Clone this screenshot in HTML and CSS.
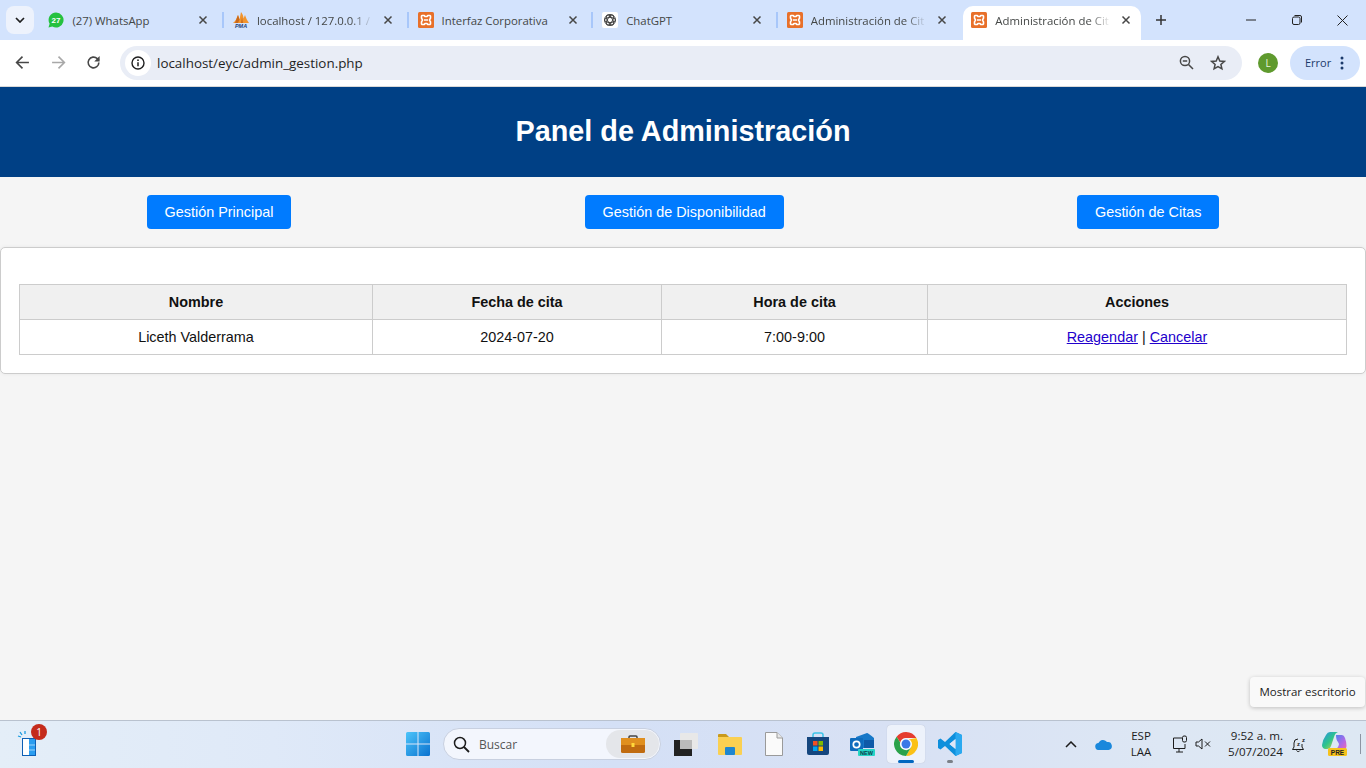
FILE: index.html
```html
<!DOCTYPE html>
<html lang="es">
<head>
<meta charset="utf-8">
<title>Administración de Citas</title>
<link rel="stylesheet" href="styles.css">
</head>
<body>
<svg class="defs" width="0" height="0" aria-hidden="true">
  <symbol id="xampp" viewBox="0 0 16 16">
    <rect width="16" height="16" rx="1.500" fill="#e8702a"/>
    <path d="M4 3.500h2.200l.8 1h2l.8-1H12l.5.5v2.200l-1 1.800 1 1.800V12l-.5.5H9.800l-.8-1H7l-.8 1H4l-.5-.5V9.800l1-1.800-1-1.800V4Z" fill="none" stroke="#fff" stroke-width="1.600" stroke-linejoin="round"/>
    <path d="M6 8h4" stroke="#fff" stroke-width="1.500"/>
  </symbol>
  <symbol id="close" viewBox="0 0 10 10">
    <path d="M1.500 1.500l7 7M8.500 1.500l-7 7" stroke="#474747" stroke-width="1.500" fill="none"/>
  </symbol>
</svg>

<div class="strip">
  <div class="tab-search"><svg width="10" height="6" viewBox="0 0 10 6"><path d="M1 1l4 4 4-4" fill="none" stroke="#1f1f1f" stroke-width="1.700"/></svg></div>
  <div class="tabs">
    <div class="tab">
      <svg class="fav" viewBox="0 0 16 16"><path d="M8 .5a7.500 7.500 0 0 0-6.400 11.300L.5 15.500l3.800-1A7.500 7.500 0 1 0 8 .5Z" fill="#25c13f"/><text x="8" y="11" class="fav-num">27</text></svg>
      <span class="title">(27) WhatsApp</span>
      <svg class="x" viewBox="0 0 10 10"><use href="#close"/></svg>
    </div>
    <div class="tab">
      <svg class="fav" viewBox="0 0 16 16"><path d="M0 11C3 9 3.500 6 5 3l1.500 4.500L8 0c1.500 2 2.500 4 2.500 6.500L12 3c1 3 2.500 6 4 8Z" fill="#f2952e"/><path d="M5 3l1.500 4.500L5 11H2ZM9 5l1 6H8Z" fill="#c9681a"/><text x="8" y="15.500" class="fav-pma">PMA</text></svg>
      <span class="title fade">localhost / 127.0.0.1 /</span>
      <svg class="x" viewBox="0 0 10 10"><use href="#close"/></svg>
    </div>
    <div class="tab">
      <svg class="fav" viewBox="0 0 16 16"><use href="#xampp"/></svg>
      <span class="title">Interfaz Corporativa</span>
      <svg class="x" viewBox="0 0 10 10"><use href="#close"/></svg>
    </div>
    <div class="tab">
      <svg class="fav" viewBox="0 0 16 16"><rect width="16" height="16" rx="2" fill="#fff"/><g fill="none" stroke="#444" stroke-width="1"><circle cx="8" cy="8" r="5.500"/><ellipse cx="8" cy="8" rx="5.500" ry="2.500" transform="rotate(60 8 8)"/><ellipse cx="8" cy="8" rx="5.500" ry="2.500" transform="rotate(-60 8 8)"/><ellipse cx="8" cy="8" rx="5.500" ry="2.500"/></g></svg>
      <span class="title">ChatGPT</span>
      <svg class="x" viewBox="0 0 10 10"><use href="#close"/></svg>
    </div>
    <div class="tab last">
      <svg class="fav" viewBox="0 0 16 16"><use href="#xampp"/></svg>
      <span class="title fade">Administración de Cit</span>
      <svg class="x" viewBox="0 0 10 10"><use href="#close"/></svg>
    </div>
    <div class="tab active">
      <svg class="fav" viewBox="0 0 16 16"><use href="#xampp"/></svg>
      <span class="title fade">Administración de Cit</span>
      <svg class="x" viewBox="0 0 10 10"><use href="#close"/></svg>
    </div>
  </div>
  <svg class="plus" width="12" height="12" viewBox="0 0 12 12"><path d="M6 1v10M1 6h10" stroke="#333" stroke-width="1.500"/></svg>
  <div class="win">
    <svg width="10" height="10" viewBox="0 0 10 10"><path d="M0 5h10" stroke="#222" stroke-width="1"/></svg>
    <svg width="10" height="10" viewBox="0 0 10 10"><rect x=".5" y="2" width="7.500" height="7.500" rx="1.500" fill="none" stroke="#222"/><path d="M2.500.5H8A1.500 1.500 0 0 1 9.500 2v5.500" fill="none" stroke="#222"/></svg>
    <svg width="11" height="11" viewBox="0 0 11 11"><path d="M.5.500l10 10M10.500.500l-10 10" stroke="#222" stroke-width="1"/></svg>
  </div>
</div>

<div class="toolbar">
  <svg class="nav-ic first" viewBox="0 0 14 14"><path d="M13 7H2M7 1.500 1.500 7 7 12.500" fill="none" stroke="#474747" stroke-width="1.500"/></svg>
  <svg class="nav-ic" viewBox="0 0 14 14"><path d="M1 7h11M7 1.500 12.500 7 7 12.500" fill="none" stroke="#a8a8a8" stroke-width="1.500"/></svg>
  <svg class="nav-ic" viewBox="0 0 14 14"><path d="M12 7a5 5 0 1 1-1.500-3.600L12 5" fill="none" stroke="#474747" stroke-width="1.500"/><path d="M12.700 1v5h-5Z" fill="#474747"/></svg>
  <div class="omni">
    <span class="info"><svg width="14" height="14" viewBox="0 0 14 14"><circle cx="7" cy="7" r="6" fill="none" stroke="#1f1f1f" stroke-width="1.400"/><path d="M7 6.200v4" stroke="#1f1f1f" stroke-width="1.500"/><circle cx="7" cy="4.200" r=".9" fill="#1f1f1f"/></svg></span>
    <span class="url">localhost/eyc/admin_gestion.php</span>
    <svg class="zoom" width="15" height="15" viewBox="0 0 15 15"><circle cx="6" cy="6" r="4.600" fill="none" stroke="#474747" stroke-width="1.500"/><path d="M3.800 6h4.400M9.500 9.500l4.500 4.500" stroke="#474747" stroke-width="1.500"/></svg>
    <svg class="star" width="16" height="16" viewBox="0 0 16 16"><path d="M8 1.800l1.800 4.200 4.500.4-3.400 3 1 4.400L8 11.500l-3.900 2.300 1-4.400-3.400-3 4.500-.4Z" fill="none" stroke="#474747" stroke-width="1.500"/></svg>
  </div>
  <span class="avatar">L</span>
  <div class="error"><span>Error</span><svg width="4" height="14" viewBox="0 0 4 14"><circle cx="2" cy="2" r="1.500" fill="#1b3a6b"/><circle cx="2" cy="7" r="1.500" fill="#1b3a6b"/><circle cx="2" cy="12" r="1.500" fill="#1b3a6b"/></svg></div>
</div>

<main class="page">
  <header class="head"><h1>Panel de Administración</h1></header>
  <nav class="actions">
    <a class="btn">Gestión Principal</a>
    <a class="btn">Gestión de Disponibilidad</a>
    <a class="btn">Gestión de Citas</a>
  </nav>
  <section class="panel">
    <table class="citas">
      <thead>
        <tr><th class="c1">Nombre</th><th class="c2">Fecha de cita</th><th class="c3">Hora de cita</th><th class="c4">Acciones</th></tr>
      </thead>
      <tbody>
        <tr><td>Liceth Valderrama</td><td>2024-07-20</td><td>7:00-9:00</td><td><a href="#r">Reagendar</a> | <a href="#c">Cancelar</a></td></tr>
      </tbody>
    </table>
  </section>
  <div class="tip">Mostrar escritorio</div>
</main>

<footer class="taskbar">
  <div class="widget">
    <svg width="24" height="28" viewBox="0 0 24 28"><path d="M1 8l3 1M3 4l2 3M8 3v3" stroke="#1a9be0" stroke-width="1.300"/><rect x="5.500" y="10.500" width="13" height="17" fill="#fff" stroke="#0d5fb5"/><rect x="12" y="11" width="6" height="16" fill="#2a9df0"/><path d="M12 17h6M12 22h6" stroke="#9dd4fa"/></svg>
    <span class="count">1</span>
  </div>
  <div class="center">
    <svg class="start" width="24" height="24" viewBox="0 0 24 24"><defs><linearGradient id="w" x1="0" y1="0" x2="1" y2="1"><stop offset="0" stop-color="#4cc4fa"/><stop offset="1" stop-color="#0a72cf"/></linearGradient></defs><path d="M0 1.500Q0 0 1.500 0H11.500V11.500H0ZM12.500 0H22.500Q24 0 24 1.500V11.500H12.500ZM0 12.500H11.500V24H1.500Q0 24 0 22.500ZM12.500 12.500H24V22.500Q24 24 22.500 24H12.500Z" fill="url(#w)"/></svg>
    <div class="search">
      <svg width="17" height="17" viewBox="0 0 17 17"><circle cx="7" cy="7" r="5.500" fill="none" stroke="#1c1c1c" stroke-width="1.500"/><path d="M11 11l5 5" stroke="#1c1c1c" stroke-width="1.800"/></svg>
      <span class="buscar">Buscar</span>
      <span class="brief"><svg width="24" height="18" viewBox="0 0 24 18"><path d="M8 4V2q0-1 1-1h6q1 0 1 1v2" fill="none" stroke="#444" stroke-width="1.500"/><rect y="3" width="24" height="15" rx="1.500" fill="#c06b10"/><rect y="3" width="24" height="7" fill="#e08f1e"/><rect x="10.500" y="8" width="3" height="4" fill="#ffd83a"/></svg></span>
    </div>
    <div class="apps">
      <span class="app"><svg width="24" height="24" viewBox="0 0 24 24"><rect x="0" y="8" width="18" height="16" fill="#222"/><rect x="6" y="1" width="18" height="16" rx="1" fill="#e8e8e8"/><rect x="6" y="8" width="12" height="9" fill="#bbb"/></svg></span>
      <span class="app"><svg width="26" height="22" viewBox="0 0 26 22"><path d="M1 2q0-1 1-1h7l3 3h-11Z" fill="#c99a1c"/><rect x="1" y="4" width="24" height="18" rx="1" fill="#fad052"/><rect x="8" y="14" width="10" height="8" rx="1" fill="#1f86cf"/></svg></span>
      <span class="app"><svg width="18" height="24" viewBox="0 0 18 24"><path d="M.5.500H12L17.500 6V23.500H.5Z" fill="#fafafa" stroke="#9a9a9a"/><path d="M12 .5V6h5.500" fill="#e8e8e8" stroke="#9a9a9a"/></svg></span>
      <span class="app store"><svg width="24" height="24" viewBox="0 0 24 24"><path d="M7 6V3q0-2 2-2h6q2 0 2 2v3" fill="none" stroke="#3cc4e8" stroke-width="1.500"/><path d="M1 5h22v16q0 2-2 2H3q-2 0-2-2Z" fill="#15467e"/><rect x="7" y="9" width="4.500" height="4.500" fill="#f25022"/><rect x="12.500" y="9" width="4.500" height="4.500" fill="#7fba00"/><rect x="7" y="14.500" width="4.500" height="4.500" fill="#00a4ef"/><rect x="12.500" y="14.500" width="4.500" height="4.500" fill="#ffb900"/></svg></span>
      <span class="app"><svg width="25" height="24" viewBox="0 0 25 24"><path d="M6 5l11-4q1 0 7 5v10H6Z" fill="#1778c8"/><path d="M14 8h10v8H14Z" fill="#0f5aa8"/><rect y="6" width="13" height="13" rx="1" fill="#0f6cbd"/><circle cx="6.500" cy="12.500" r="3.200" fill="none" stroke="#fff" stroke-width="1.700"/><rect x="8" y="17" width="17" height="7" rx="1" fill="#27d5c5"/><text x="16.500" y="22.800" class="badge-new">NEW</text></svg></span>
      <span class="app on"><svg width="24" height="24" viewBox="0 0 24 24"><path d="M12 0a12 12 0 0 1 10.400 6H12a6 6 0 0 0-5.800 4.500L2.600 4.700A12 12 0 0 1 12 0Z" fill="#e53c2f"/><path d="M22.400 6A12 12 0 0 1 12 24l5.200-9A6 6 0 0 0 16 8h-4Z" fill="#fbc116"/><path d="M2.600 4.700A12 12 0 0 0 12 24l5.200-9a6 6 0 0 1-11-4.500Z" fill="#2aa24a"/><circle cx="12" cy="12" r="5.600" fill="#fff"/><circle cx="12" cy="12" r="4.500" fill="#3b78e7"/></svg><i class="run"></i></span>
      <span class="app"><svg width="24" height="24" viewBox="0 0 24 24"><path d="M17.500 0 24 3v18l-6.500 3L7 14l-4.500 3.500L0 16V8l2.500-1.500L7 10ZM17.500 7 11.500 12l6 5Z" fill="#0e8fdc"/><path d="M17.500 0 24 3v18l-6.500 3Z" fill="#2aa9f0"/><path d="M17.500 7v10l-6-5Z" fill="#dde6f6"/></svg><i class="dot"></i></span>
    </div>
  </div>
  <div class="tray">
    <svg class="t-chev" width="12" height="7" viewBox="0 0 12 7"><path d="M1 6l5-5 5 5" fill="none" stroke="#1c1c1c" stroke-width="1.500"/></svg>
    <svg class="t-cloud" width="17" height="12" viewBox="0 0 17 12"><path d="M4 12a3.500 3.500 0 0 1-.5-7A5 5 0 0 1 12 4a4 4 0 0 1 1.500 8Z" fill="#1a88dc"/></svg>
    <div class="lang"><span>ESP</span><span>LAA</span></div>
    <svg class="t-net" width="16" height="18" viewBox="0 0 16 18"><path d="M10 3H1.500v10.500H13V9M7 14v3M4 17h7" fill="none" stroke="#1c1c1c"/><rect x="10.500" y="1" width="4" height="6" rx="1.500" fill="none" stroke="#1c1c1c"/></svg>
    <svg class="t-vol" width="16" height="12" viewBox="0 0 16 12"><path d="M1 4h2.500L7 1v10L3.500 8H1Z" fill="none" stroke="#1c1c1c"/><path d="M10 3.500l5 5M15 3.500l-5 5" stroke="#1c1c1c"/></svg>
    <div class="clock"><span>9:52 a. m.</span><span>5/07/2024</span></div>
    <svg class="t-bell" width="16" height="17" viewBox="0 0 16 17"><path d="M7 3a4 4 0 0 0-4 4v4l-1.500 2.500h11L11 11V8M5.500 14.500a2 2 0 0 0 3.500 0" fill="none" stroke="#1c1c1c"/><text x="6" y="10" class="zz">z</text><text x="11" y="6" class="zz">z</text></svg>
    <svg class="t-copilot" width="26" height="24" viewBox="0 0 26 24"><defs><linearGradient id="cp" x1="0" y1="0" x2="1" y2="1"><stop offset="0" stop-color="#2a8fe8"/><stop offset=".5" stop-color="#2ec58a"/><stop offset="1" stop-color="#f2d23a"/></linearGradient><linearGradient id="cq" x1="0" y1="0" x2="1" y2="1"><stop offset="0" stop-color="#4f7ff0"/><stop offset=".6" stop-color="#b06ae6"/><stop offset="1" stop-color="#ee6ab0"/></linearGradient></defs><path d="M8 0h8q-3 1-4 5l-3 9q-1 3-4 3H3q-3-1-3-4 1-6 4-10 1.500-3 4-3Z" fill="url(#cp)"/><path d="M14 3h6q2 0 3 3 1.500 4 1.500 8 0 3-3 3h-8q3-1 3.500-5l-1-2Q14 8 14 3Z" fill="url(#cq)"/><rect x="6" y="16" width="19" height="8" rx="1.500" fill="#f6c21c"/><text x="15.500" y="22.500" class="badge-pre">PRE</text></svg>
    <i class="t-sep"></i>
  </div>
</footer>
</body>
</html>
```

FILE: styles.css
```css
* { box-sizing: border-box; }
html, body { margin: 0; height: 100%; overflow: hidden; }
body {
  display: flex;
  flex-direction: column;
  width: 1366px;
  height: 768px;
  background: #f5f5f5;
  font-family: "Liberation Sans", Arial, sans-serif;
}
.defs { display: block; height: 0; }

/* tab strip */
.strip {
  flex: none;
  height: 40px;
  background: #d3e3fd;
  display: flex;
  align-items: flex-start;
  font-family: "Open Sans", "Noto Sans", sans-serif;
}
.tab-search {
  flex: none;
  width: 28px;
  height: 28px;
  margin: 6px 4.400px 0 6px;
  border-radius: 8px;
  background: #edf2fc;
  display: flex;
  align-items: center;
  justify-content: center;
}
.tabs { flex: none; display: flex; width: 1107.600px; }
.tab {
  flex: none;
  width: 184.600px;
  height: 34px;
  margin-top: 6px;
  padding: 0 0 6px 10px;
  display: flex;
  align-items: center;
  position: relative;
  font-size: 11.400px;
  color: #444746;
}
.tab::after {
  content: "";
  position: absolute;
  right: -1px;
  top: 6px;
  width: 2px;
  height: 16px;
  background: #a8c7fa;
}
.tab.last::after, .tab.active::after { display: none; }
.tab.active {
  background: #fff;
  border-radius: 10px 10px 0 0;
  width: 178px;
  left: 2px;
  padding-left: 8px;
}
.fav { flex: none; width: 16px; height: 16px; margin-right: 8px; }
.title {
  flex: none;
  width: 118px;
  overflow: hidden;
  white-space: nowrap;
}
.title.fade {
  -webkit-mask-image: linear-gradient(90deg, #000 94px, transparent 116px);
  mask-image: linear-gradient(90deg, #000 94px, transparent 116px);
}
.x { flex: none; width: 10px; height: 10px; margin-left: 8px; }
.fav-num { font: bold 8px "Liberation Sans", sans-serif; fill: #fff; text-anchor: middle; }
.fav-pma { font: bold italic 5.500px "Liberation Sans", sans-serif; fill: #1b3f7a; text-anchor: middle; }
.plus { flex: none; margin: 14px 0 0 9px; }
.win {
  margin-left: auto;
  width: 144px;
  height: 40px;
  display: flex;
  align-items: center;
  justify-content: space-between;
  padding: 0 18px 0 24px;
}

/* toolbar */
.toolbar {
  flex: none;
  height: 47px;
  background: #fff;
  border-bottom: 1px solid #d9d9d9;
  display: flex;
  align-items: center;
  padding: 0 6px 1px 0;
  font-family: "Open Sans", "Noto Sans", sans-serif;
}
.nav-ic { flex: none; width: 15px; height: 15px; margin-right: 20.500px; }
.nav-ic.first { margin-left: 15px; }
.omni {
  flex: none;
  width: 1122px;
  height: 34px;
  margin-left: -1.500px;
  background: #e9edf6;
  border-radius: 17px;
  display: flex;
  align-items: center;
  padding: 0 16px 0 5px;
}
.info {
  width: 26px;
  height: 26px;
  border-radius: 50%;
  background: #fff;
  display: flex;
  align-items: center;
  justify-content: center;
}
.url { margin-left: 6px; font-size: 13.400px; color: #1f1f1f; }
.zoom { margin-left: auto; }
.star { margin-left: 16px; }
.avatar {
  flex: none;
  width: 20px;
  height: 20px;
  margin-left: 16px;
  border-radius: 50%;
  background: #5f9a2e;
  color: #e8f3dc;
  font-size: 10px;
  display: flex;
  align-items: center;
  justify-content: center;
}
.error {
  flex: none;
  width: 70px;
  height: 34px;
  margin-left: 12px;
  border-radius: 17px;
  background: #d3e3fd;
  display: flex;
  align-items: center;
  gap: 9px;
  padding-left: 15px;
  color: #1b3a6b;
  font-size: 11px;
}

/* page */
.page { flex: 1; min-height: 0; position: relative; background: #f5f5f5; }
.head {
  height: 90px;
  padding-bottom: 2px;
  background: #004085;
  display: flex;
  align-items: center;
  justify-content: center;
}
.head h1 { margin: 0; color: #fff; font-size: 28.800px; font-weight: bold; }
.actions {
  display: flex;
  justify-content: space-around;
  padding: 18px 0;
}
.btn {
  display: block;
  padding: 0 18px;
  line-height: 34px;
  height: 34px;
  border-radius: 4px;
  background: #007bff;
  color: #fff;
  font-size: 14.400px;
}
.panel {
  background: #fff;
  border: 1px solid #ccc;
  border-radius: 5px;
  padding: 36px 18px 18px;
  height: 127px;
  box-shadow: 0 0 4px rgba(0, 0, 0, .06);
}
.citas {
  width: 1327px;
  table-layout: fixed;
  border-collapse: collapse;
  font-size: 14.400px;
  color: #111;
}
.citas th, .citas td {
  border: 1px solid #ccc;
  height: 35px;
  padding: 0;
  text-align: center;
}
.citas th { background: #f0f0f0; font-weight: bold; }
.c1 { width: 353px; }
.c2 { width: 289px; }
.c3 { width: 266px; }
.c4 { width: 419px; }
.citas a { color: #2200cc; }
.tip {
  position: absolute;
  right: 1px;
  bottom: 13px;
  width: 115px;
  height: 30px;
  padding-bottom: 2px;
  background: #f9f9f9;
  border-radius: 4px;
  box-shadow: 0 1px 4px rgba(0, 0, 0, .22);
  display: flex;
  align-items: center;
  justify-content: center;
  font: 11.500px "Open Sans", sans-serif;
  color: #1c1c1c;
}

/* taskbar */
.taskbar {
  flex: none;
  height: 48px;
  border-top: 1px solid #b9c2cf;
  padding-bottom: 1px;
  background: linear-gradient(90deg, #e4eef8 0, #dfe9f8 20%, #d4e0f6 45%, #d8e1f4 65%, #dde7f4 85%, #dde8f3 100%);
  display: flex;
  align-items: center;
  font-family: "Open Sans", "Noto Sans", sans-serif;
  color: #1c1c1c;
}
.widget { flex: none; position: relative; width: 24px; height: 28px; margin: 0 0 4px 17px; }
.count {
  position: absolute;
  left: 14px;
  top: -4px;
  width: 16px;
  height: 16px;
  border-radius: 50%;
  background: #c42b1c;
  color: #fff;
  font-size: 10px;
  line-height: 16px;
  text-align: center;
}
.center { flex: none; display: flex; align-items: center; margin-left: 365px; }
.start { flex: none; }
.search {
  flex: none;
  width: 218px;
  height: 32px;
  margin-left: 13px;
  border-radius: 16px;
  background: #f3f6fd;
  border: 1px solid #c8d0e0;
  display: flex;
  align-items: center;
  padding: 0 1px 0 9px;
}
.buscar { margin-left: 9px; font-size: 12px; color: #555; }
.brief {
  margin-left: auto;
  width: 53px;
  height: 28px;
  border-radius: 14px;
  background: #e4e6ea;
  display: flex;
  align-items: center;
  justify-content: center;
}
.apps { flex: none; display: flex; align-items: center; margin-left: 3px; }
.app {
  flex: none;
  position: relative;
  width: 44px;
  height: 38px;
  display: flex;
  align-items: center;
  justify-content: center;
}
.app.on { background: #edf2fb; border-radius: 4px; width: 38px; margin: 0 3px; box-shadow: 0 0 1px rgba(0,0,0,.2); }
.run {
  position: absolute;
  left: 11px;
  bottom: 0;
  width: 16px;
  height: 3px;
  border-radius: 2px;
  background: #0067c0;
}
.dot {
  position: absolute;
  left: 19px;
  bottom: 0;
  width: 6px;
  height: 3px;
  border-radius: 2px;
  background: #7b8088;
}
.badge-new { font: bold 5.500px "Liberation Sans", sans-serif; fill: #0b3b4a; text-anchor: middle; }
.badge-pre { font: bold 6.500px "Liberation Sans", sans-serif; fill: #222; text-anchor: middle; }
.zz { font: bold 6px "Liberation Sans", sans-serif; fill: #1c1c1c; }

.tray { flex: none; display: flex; align-items: center; margin-left: 93px; }
.t-chev { flex: none; }
.t-cloud { flex: none; margin-left: 18px; }
.lang {
  flex: none;
  width: 36px;
  margin-left: 11px;
  display: flex;
  flex-direction: column;
  align-items: center;
  font-size: 11.500px;
  line-height: 16px;
}
.t-net { flex: none; margin-left: 13px; }
.t-vol { flex: none; margin-left: 7px; }
.clock {
  flex: none;
  width: 60px;
  margin-left: 12px;
  display: flex;
  flex-direction: column;
  align-items: flex-end;
  font-size: 11.600px;
  line-height: 16px;
}
.t-bell { flex: none; margin-left: 8px; }
.t-copilot { flex: none; margin-left: 15px; }
.t-sep { flex: none; width: 1px; height: 20px; margin-left: 12px; background: #8c95a3; }
```
